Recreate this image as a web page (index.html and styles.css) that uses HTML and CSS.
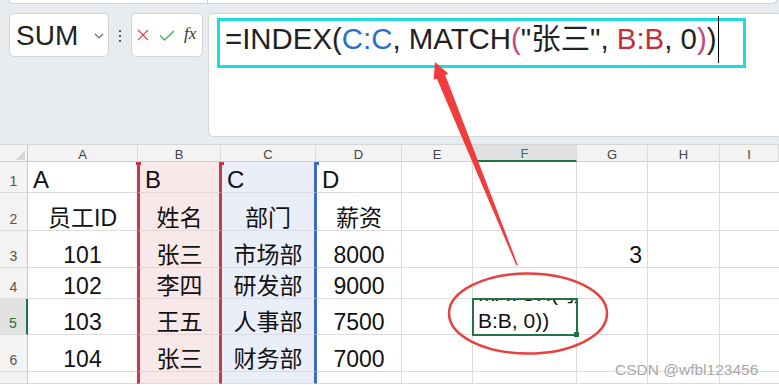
FILE: index.html
```html
<!DOCTYPE html>
<html lang="zh-CN">
<head>
  <meta charset="UTF-8">
  <meta name="viewport" content="width=device-width, initial-scale=1.0">
  <title>INDEX MATCH</title>
  <link rel="stylesheet" href="styles.css">
</head>
<body>
  <!-- Formula toolbar -->
  <div class="toolbar">
    <div class="ribbon-edge">
      <div class="edge-left"></div>
      <div class="edge-right"></div>
    </div>
    <div class="bar-row">
      <div class="namebox">
        <span class="name">SUM</span>
        <svg class="chevron" width="10" height="6" viewBox="0 0 10 6"><polyline points="1,1 5,5 9,1" fill="none" stroke="#666" stroke-width="1.2"/></svg>
      </div>
      <div class="dots"><i></i><i></i><i></i></div>
      <div class="fx-buttons">
        <svg class="btn-cancel" width="12" height="12" viewBox="0 0 12 12"><path d="M1 1 L11 11 M11 1 L1 11" stroke="#e84a4a" stroke-width="1.3"/></svg>
        <svg class="btn-ok" width="16" height="11" viewBox="0 0 16 11"><polyline points="1,5.5 5.5,10 15,1" fill="none" stroke="#4caf62" stroke-width="1.4"/></svg>
        <span class="fx">fx</span>
      </div>
      <div class="formula-bar">
        <div class="formula-box">=INDEX(<span class="ref-c">C:C</span>, MATCH<span class="paren">(</span>"张三", <span class="ref-b">B:B</span>, 0<span class="paren">)</span>)<span class="caret"></span></div>
      </div>
    </div>
  </div>

  <!-- Sheet grid -->
  <div class="sheet">
    <div class="corner"></div>
    <div class="hd">A</div><div class="hd">B</div><div class="hd">C</div><div class="hd">D</div><div class="hd">E</div><div class="hd hd-active">F</div><div class="hd">G</div><div class="hd">H</div><div class="hd last">I</div>

    <div class="rh">1</div>
    <div class="cell left">A</div><div class="cell left colB cap">B</div><div class="cell left colC cap">C</div><div class="cell left colD">D</div>
    <div class="cell"></div><div class="cell"></div><div class="cell"></div><div class="cell"></div><div class="cell last"></div>

    <div class="rh">2</div>
    <div class="cell">员工ID</div><div class="cell colB">姓名</div><div class="cell colC">部门</div><div class="cell colD">薪资</div>
    <div class="cell"></div><div class="cell"></div><div class="cell"></div><div class="cell"></div><div class="cell last"></div>

    <div class="rh">3</div>
    <div class="cell">101</div><div class="cell colB">张三</div><div class="cell colC">市场部</div><div class="cell colD">8000</div>
    <div class="cell"></div><div class="cell"></div><div class="cell right">3</div><div class="cell"></div><div class="cell last"></div>

    <div class="rh">4</div>
    <div class="cell">102</div><div class="cell colB">李四</div><div class="cell colC">研发部</div><div class="cell colD">9000</div>
    <div class="cell"></div><div class="cell"></div><div class="cell"></div><div class="cell"></div><div class="cell last"></div>

    <div class="rh rh-active">5</div>
    <div class="cell">103</div><div class="cell colB">王五</div><div class="cell colC">人事部</div><div class="cell colD">7500</div>
    <div class="cell"></div>
    <div class="cell sel"><div class="wrap"><span>MATCH("张三",</span><span>B:B, 0))</span></div></div>
    <div class="cell"></div><div class="cell"></div><div class="cell last"></div>

    <div class="rh">6</div>
    <div class="cell">104</div><div class="cell colB">张三</div><div class="cell colC">财务部</div><div class="cell colD">7000</div>
    <div class="cell"></div><div class="cell"></div><div class="cell"></div><div class="cell"></div><div class="cell last"></div>

    <div class="rh"></div>
    <div class="cell"></div><div class="cell colB"></div><div class="cell colC"></div><div class="cell colD"></div>
    <div class="cell"></div><div class="cell"></div><div class="cell"></div><div class="cell"></div><div class="cell last"></div>
  </div>

  <!-- Annotation layer: arrow and ellipse drawn over the screenshot -->
  <svg class="annotations" width="779" height="385" viewBox="0 0 779 385">
    <ellipse cx="528" cy="313.5" rx="79" ry="40" fill="none" stroke="#e8403f" stroke-width="2.5"/>
    <polygon fill="#f03c3c" points="435,62 448.4,73.8 445.2,75.1 517.7,264.7 516.3,265.3 436.8,78.5 433.6,79.8"/>
  </svg>

  <div class="watermark">CSDN @wfbl123456</div>
</body>
</html>
```

FILE: styles.css
```css
/* General Styles */
body {
  margin: 0;
  width: 779px;
  height: 385px;
  overflow: hidden;
  position: relative;
  font-family: 'Liberation Sans', 'Noto Sans CJK SC', sans-serif;
  color: #111;
  background: #fff;
}

/* Toolbar */
.toolbar {
  height: 145px;
  background-color: #e9ecef;
  box-sizing: border-box;
  border-bottom: 1px solid #d6d6d6;
}

.ribbon-edge {
  display: flex;
  height: 4px;
  margin: 0 2px 0 9px;
}

.edge-left,
.edge-right {
  background: #fff;
  border: 1px solid #cfd3d7;
  border-top: none;
}

.edge-left {
  width: 199px;
  box-sizing: border-box;
  border-radius: 0 0 0 4px;
}

.edge-right {
  flex: 1;
  border-left: none;
  border-radius: 0 0 4px 0;
}

.bar-row {
  display: flex;
  align-items: flex-start;
  margin-top: 9px;
  padding-left: 9px;
}

.namebox {
  width: 100px;
  height: 44px;
  box-sizing: border-box;
  display: flex;
  align-items: center;
  justify-content: space-between;
  padding: 0 4px 0 6px;
  background: #fff;
  border: 1px solid #d3d6da;
  border-radius: 5px;
}

.name {
  font-size: 28px;
  line-height: 28px;
  color: #222;
  margin-top: 1px;
}

.chevron {
  margin-top: 2px;
}

.dots {
  width: 22px;
  display: flex;
  flex-direction: column;
  align-items: center;
  gap: 3px;
  padding-top: 17px;
}

.dots i {
  width: 2px;
  height: 2px;
  background: #555;
}

.fx-buttons {
  width: 72px;
  height: 44px;
  box-sizing: border-box;
  display: flex;
  align-items: center;
  padding-left: 5px;
  background: #fff;
  border: 1px solid #d3d6da;
  border-radius: 5px;
}

.btn-ok {
  margin-left: 10px;
}

.fx {
  margin-left: 9px;
  font-family: 'Liberation Serif', serif;
  font-style: italic;
  font-size: 17px;
  color: #333;
  margin-top: -2px;
}

.formula-bar {
  flex: 1;
  height: 124px;
  margin-left: 5px;
  margin-right: -4px;
  box-sizing: border-box;
  padding: 4px 0 0 8px;
  background: #fff;
  border: 1px solid #d3d6da;
  border-radius: 5px;
}

.formula-box {
  width: 529px;
  height: 50px;
  box-sizing: border-box;
  border: 3px solid #1fdcdc;
  padding: 1px 0 0 5px;
  font-size: 29.4px;
  line-height: 33px;
  color: #222;
  white-space: nowrap;
}

.ref-c { color: #2a72c9; }
.ref-b { color: #c0313a; }
.paren { color: #c9457f; }

/* Text cursor */
.caret {
  position: relative;
}

.caret::after {
  content: '';
  position: absolute;
  left: 2px;
  top: -6px;
  width: 1px;
  height: 47px;
  background: #000;
}

/* Sheet */
.sheet {
  display: grid;
  grid-template-columns: 28px 110px 83px 95px 86px 71px 104px 71px 72px 59px;
  grid-template-rows: 17px 31px 38px 37px 31px 36px 37px 12px;
  background: #fff;
}

.corner,
.hd,
.rh,
.cell {
  box-sizing: border-box;
}

.corner {
  position: relative;
  background: #f3f3f3;
  border-right: 1px solid #c8c8c8;
  border-bottom: 1px solid #cdcdcd;
}

.corner::after {
  content: '';
  position: absolute;
  left: 15px;
  top: 5px;
  width: 10px;
  height: 10px;
  background: linear-gradient(135deg, transparent 50%, #d6d6d6 50%);
}

.hd {
  display: flex;
  align-items: center;
  justify-content: center;
  padding-top: 2px;
  background: #f3f3f3;
  border-right: 1px solid #d9d9d9;
  border-bottom: 1px solid #cdcdcd;
  font-size: 13px;
  color: #444;
}

.hd-active {
  background: #e1e1e1;
  color: #2f6f52;
  border-bottom: 2px solid #217346;
}

.rh {
  display: flex;
  align-items: flex-end;
  justify-content: center;
  padding-bottom: 3px;
  background: #f3f3f3;
  border-right: 1px solid #c8c8c8;
  border-bottom: 1px solid #dcdcdc;
  font-size: 14px;
  line-height: 16px;
  color: #555;
}

.rh-active {
  background: #e1e1e1;
  color: #217346;
  border-right: 2px solid #217346;
}

.cell {
  display: flex;
  align-items: flex-end;
  justify-content: center;
  border-right: 1px solid #dcdcdc;
  border-bottom: 1px solid #dcdcdc;
  font-size: 23px;
  line-height: 24px;
  white-space: nowrap;
}

.cell.last {
  border-right: none;
}

.cell.left {
  justify-content: flex-start;
  padding-left: 5px;
  font-size: 24px;
}

.cell.right {
  justify-content: flex-end;
  padding-right: 5px;
}

/* Highlighted reference columns */
.colB {
  background: #f9e8e9;
  border-left: 2px solid #c53a45;
  border-right: 2px solid #c53a45;
  border-bottom-color: #e6d5d6;
  box-shadow: -1px 0 0 #c53a45;
}

.colC {
  background: #eaeef8;
  border-left: 1px solid #c53a45;
  border-right: 2px solid #3b6cc4;
  border-bottom-color: #d7dce6;
}

.colD {
  border-left: 1px solid #3b6cc4;
}

.cap {
  position: relative;
}

.cap::before,
.cap::after {
  content: '';
  position: absolute;
  top: 0;
  width: 5px;
  height: 3px;
  z-index: 1;
}

.colB.cap::before {
  left: -4px;
  background: #c53a45;
}

.colB.cap::after {
  right: -5px;
  background: #c53a45;
}

.colC.cap::after {
  right: -5px;
  background: #3b6cc4;
}

/* Selected cell */
.sel {
  position: relative;
  z-index: 2;
  justify-content: flex-start;
  outline: 2px solid #217346;
  outline-offset: -1px;
}

.sel::after {
  content: '';
  position: absolute;
  right: -3px;
  bottom: -3px;
  width: 5px;
  height: 5px;
  background: #217346;
}

.sel .wrap {
  width: 100%;
  height: 100%;
  overflow: hidden;
  display: flex;
  flex-direction: column;
  justify-content: flex-end;
  padding-left: 5px;
  box-sizing: border-box;
  font-size: 21px;
  line-height: 27px;
}

/* Annotation overlay */
.annotations {
  position: absolute;
  top: 0;
  left: 0;
  pointer-events: none;
  z-index: 5;
}

.watermark {
  position: absolute;
  left: 615px;
  top: 361px;
  font-size: 15.5px;
  line-height: 18px;
  color: #a8a8a8;
  text-shadow: 0 0 1px #fff;
  z-index: 6;
}
```
